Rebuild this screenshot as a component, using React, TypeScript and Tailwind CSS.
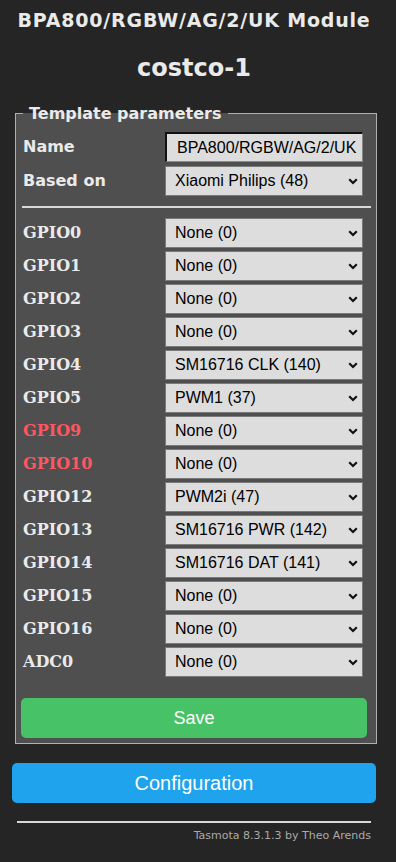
import React from 'react';

const gpios: [string, string, boolean?][] = [
  ['GPIO0', 'None (0)'],
  ['GPIO1', 'None (0)'],
  ['GPIO2', 'None (0)'],
  ['GPIO3', 'None (0)'],
  ['GPIO4', 'SM16716 CLK (140)'],
  ['GPIO5', 'PWM1 (37)'],
  ['GPIO9', 'None (0)', true],
  ['GPIO10', 'None (0)', true],
  ['GPIO12', 'PWM2i (47)'],
  ['GPIO13', 'SM16716 PWR (142)'],
  ['GPIO14', 'SM16716 DAT (141)'],
  ['GPIO15', 'None (0)'],
  ['GPIO16', 'None (0)'],
  ['ADC0', 'None (0)'],
];

const Chevron = () => (
  <svg width="10" height="7" viewBox="0 0 10 7" className="shrink-0">
    <path d="M1.2 1.3 L5 5 L8.8 1.3" fill="none" stroke="#111" strokeWidth="2.2" />
  </svg>
);

const FakeSelect = ({ value }: { value: string }) => (
  <div className="w-[198px] h-[30px] bg-[#dddddd] border border-[#7a7a7a] flex items-center justify-between pl-[9px] pr-[4px] text-[16px] text-black font-['Liberation_Sans',Arial,sans-serif]">
    <span>{value}</span>
    <Chevron />
  </div>
);

const App: React.FC = () => {
  return (
    <div className="min-h-screen bg-[#252525] text-[#eaeaea] font-['DejaVu_Sans',Verdana,sans-serif]">
      <div className="w-[364px] ml-[12px] pt-[9px]">
        <h3 className="text-center font-bold text-[19px] leading-[22px] tracking-[0.8px]">BPA800/RGBW/AG/2/UK Module</h3>
        <h2 className="text-center font-bold text-[24px] leading-[28px] mt-[23px]">costco-1</h2>

        <fieldset className="mx-[3px] mt-[22px] border border-[#b0b0b0] bg-[#4f4f4f] pl-[7px] pr-[9px] pb-[5px]">
          <legend className="ml-0 px-[6px] font-bold text-[16px] leading-[19px]">Template parameters</legend>
          <div className="pt-[9px]">
            <div className="flex items-center h-[30px]">
              <div className="w-[142px] font-bold text-[16px]">Name</div>
              <div className="w-[198px] h-[30px] bg-[#dddddd] border-t-2 border-l-2 border-t-[#111] border-l-[#111] border-r border-b border-r-[#888] border-b-[#888] flex items-center pl-[10px] text-[16px] text-black font-['Liberation_Sans',Arial,sans-serif] overflow-hidden whitespace-nowrap">
                BPA800/RGBW/AG/2/UK
              </div>
            </div>
            <div className="flex items-center h-[30px] mt-[4px]">
              <div className="w-[142px] font-bold text-[16px]">Based on</div>
              <FakeSelect value="Xiaomi Philips (48)" />
            </div>
            <div className="h-[2px] bg-[#d8d8d8] mt-[10px] ml-[-1px] mr-[-4px]" />
            <div className="flex flex-col gap-[3px] mt-[10px]">
              {gpios.map(([name, value, warn]) => (
                <div key={name} className="flex items-center h-[30px]">
                  <div
                    className={`w-[142px] font-bold text-[16px] font-['DejaVu_Serif',serif] ${warn ? 'text-[#ff5661]' : 'text-[#eaeaea]'}`}
                  >
                    {name}
                  </div>
                  <FakeSelect value={value} />
                </div>
              ))}
            </div>
          </div>
          <button className="mt-[21px] ml-[-2px] w-[346px] h-[40px] rounded-[5px] bg-[#47c266] text-white text-[18px] font-['Liberation_Sans',Arial,sans-serif]">
            Save
          </button>
        </fieldset>

        <button className="mt-[19px] w-[364px] h-[40px] rounded-[5px] bg-[#1fa3ec] text-white text-[20px] font-['Liberation_Sans',Arial,sans-serif]">
          Configuration
        </button>

        <div className="h-[2px] bg-[#d8d8d8] mt-[18px] mx-[5px]" />
        <div className="text-right text-[11px] text-[#aaaaaa] mr-[5px] mt-[5px]">Tasmota 8.3.1.3 by Theo Arends</div>
      </div>
    </div>
  );
};

export default App;
